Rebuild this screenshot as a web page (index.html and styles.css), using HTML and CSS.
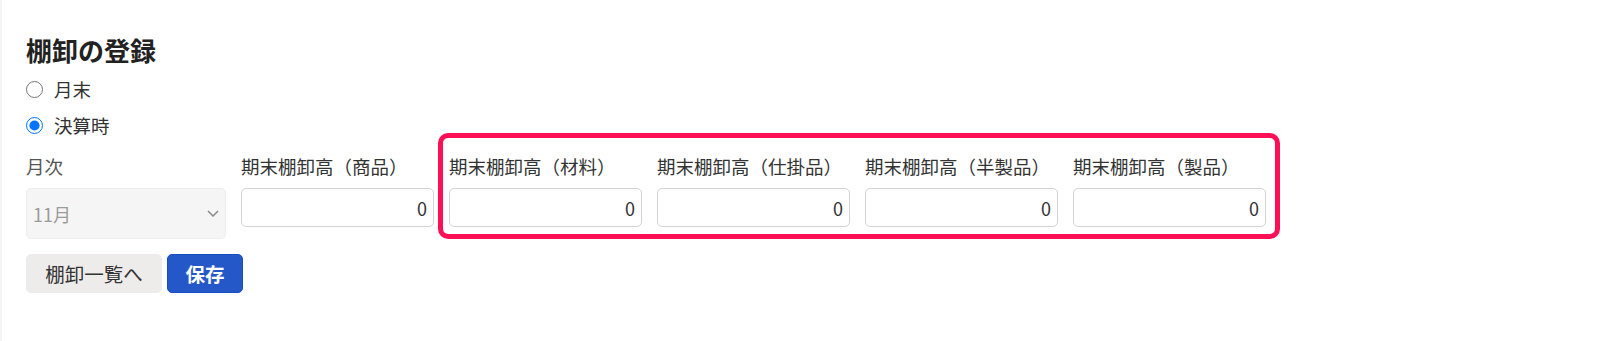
FILE: index.html
```html
<!DOCTYPE html>
<html lang="ja">
<head>
<meta charset="utf-8">
<title>棚卸の登録</title>
<link rel="stylesheet" href="styles.css">
</head>
<body>
<main class="page">
  <h1 class="title">棚卸の登録</h1>
  <div class="radios">
    <label class="radio"><input type="radio" name="period" value="month"><span>月末</span></label>
    <label class="radio"><input type="radio" name="period" value="settle" checked><span>決算時</span></label>
  </div>
  <div class="form-row">
    <div class="field field-month">
      <div class="field-label">月次</div>
      <div class="select-wrap">
        <select class="select" disabled><option>11月</option></select>
        <svg class="chevron" width="12" height="7" viewBox="0 0 12 7"><path d="M1 1l5 5 5-5" fill="none" stroke="#8a8a8a" stroke-width="1.5"/></svg>
      </div>
    </div>
    <div class="field">
      <div class="field-label">期末棚卸高（商品）</div>
      <input class="num" type="text" value="0">
    </div>
    <div class="group">
      <div class="field">
        <div class="field-label">期末棚卸高（材料）</div>
        <input class="num" type="text" value="0">
      </div>
      <div class="field">
        <div class="field-label">期末棚卸高（仕掛品）</div>
        <input class="num" type="text" value="0">
      </div>
      <div class="field">
        <div class="field-label">期末棚卸高（半製品）</div>
        <input class="num" type="text" value="0">
      </div>
      <div class="field">
        <div class="field-label">期末棚卸高（製品）</div>
        <input class="num" type="text" value="0">
      </div>
    </div>
  </div>
  <div class="actions">
    <button class="btn btn-gray" type="button">棚卸一覧へ</button>
    <button class="btn btn-blue" type="button">保存</button>
  </div>
</main>
</body>
</html>
```
FILE: styles.css
```css
html, body {
  margin: 0;
  padding: 0;
  background: #ffffff;
}
body {
  font-family: "Noto Sans CJK JP", "Noto Sans", sans-serif;
  color: #333333;
  border-left: 2px solid #f4f4f4;
  min-height: 341px;
  box-sizing: border-box;
}
.page {
  padding: 34px 0 0 24px;
}
.title {
  margin: 0;
  font-size: 26px;
  line-height: 31px;
  font-weight: 700;
  color: #222222;
}
.radios {
  margin-top: 6px;
  display: flex;
  flex-direction: column;
}
.radio {
  display: flex;
  align-items: center;
  height: 36px;
  font-size: 18.5px;
  color: #333333;
}
.radio input {
  width: 17px;
  height: 17px;
  margin: 0 11px 0 0;
}
.form-row {
  margin-top: 11px;
  display: flex;
  align-items: flex-start;
  gap: 15px;
}
.field {
  width: 193px;
  display: flex;
  flex-direction: column;
}
.field-month {
  width: 200px;
}
.field-label {
  font-size: 18.5px;
  line-height: 24px;
  color: #333333;
  white-space: nowrap;
  margin-bottom: 10px;
}
.field-month .field-label {
  color: #555555;
}
.select-wrap {
  position: relative;
}
.select {
  appearance: none;
  -webkit-appearance: none;
  width: 100%;
  height: 51px;
  box-sizing: border-box;
  background: #f5f5f5;
  border: 1px solid #ededed;
  border-radius: 5px;
  padding: 0 6px;
  font-family: inherit;
  font-size: 18px;
  color: #9b9b9b;
  opacity: 1;
}
.chevron {
  position: absolute;
  right: 7px;
  top: 22px;
}
.num {
  width: 100%;
  height: 39px;
  box-sizing: border-box;
  border: 1px solid #d3d3d3;
  border-radius: 5px;
  padding: 0 6px;
  font-family: inherit;
  font-size: 18px;
  color: #333333;
  text-align: right;
  background: #ffffff;
}
.group {
  position: relative;
  display: flex;
  gap: 15px;
}
.group::after {
  content: "";
  position: absolute;
  top: -21px;
  bottom: -12px;
  left: -11px;
  right: -14px;
  border: 5px solid #ff1056;
  border-radius: 10px;
  pointer-events: none;
}
.actions {
  margin-top: 15px;
  display: flex;
  gap: 5px;
}
.btn {
  height: 39px;
  box-sizing: border-box;
  border-radius: 5px;
  font-family: inherit;
  font-size: 19.5px;
  padding: 0 17px;
  cursor: pointer;
}
.btn-gray {
  width: 136px;
  background: #eeeceb;
  border: 1px solid #eeeceb;
  color: #333333;
}
.btn-blue {
  width: 76px;
  background: #2458c8;
  border: 1px solid #1a4cc2;
  color: #ffffff;
  font-weight: 700;
}
```
